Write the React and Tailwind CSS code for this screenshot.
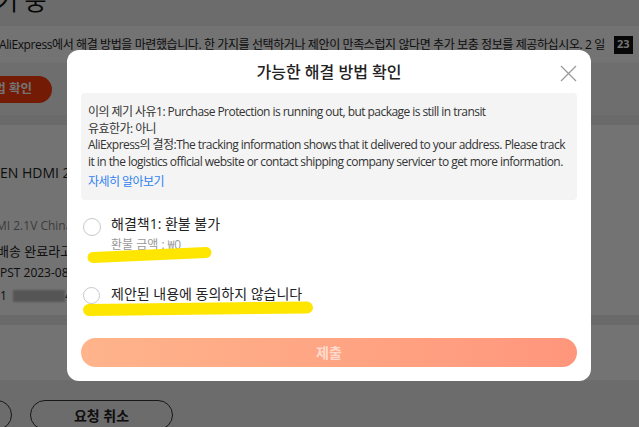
import React from "react";

const FONT = { fontFamily: "'Open Sans', 'Noto Sans CJK KR', sans-serif" };

export default function App() {
  return (
    <div
      className="relative w-[639px] h-[427px] overflow-hidden bg-[#efefef] text-[#222]"
      style={FONT}
    >
      {/* underlying page */}
      <div className="flex flex-col">
        <div className="h-[26px] bg-[#efefef] overflow-hidden">
          <div className="-mt-[15px] -ml-[26px] text-[24px] leading-[32px] whitespace-nowrap text-[#111]">
            대기 중
          </div>
        </div>
        <div className="h-[37px] bg-[#ffffff] flex items-center whitespace-nowrap overflow-hidden">
          <span className="text-[12px] tracking-[-0.4px] text-[#222] -ml-[1px]">
            AliExpress에서 해결 방법을 마련했습니다. 한 가지를 선택하거나 제안이 만족스럽지 않다면 추가 보충 정보를 제공하십시오. 2 일
          </span>
          <span className="ml-[9px] w-[19px] h-[18px] shrink-0 bg-[#111] text-white text-[11px] font-bold flex items-center justify-center">
            23
          </span>
        </div>
        <div className="h-[52px] bg-[#f3f3f3] flex items-center">
          <div className="w-[52px] flex justify-end">
            <div className="shrink-0 h-[27px] rounded-full bg-[#ff3d0a] text-white text-[12.5px] font-bold flex items-center pl-[20px] pr-[20px] whitespace-nowrap">
              해결 방법 확인
            </div>
          </div>
        </div>
        <div className="h-[10px] bg-[#eaeaea]" />
        <div className="h-[190px] bg-white flex flex-col whitespace-nowrap">
          <div className="mt-[38px] text-[14px] leading-[20px] text-[#222]">EN HDMI 2.1V 8K Cable</div>
          <div className="mt-[35px] -ml-[4px] text-[12px] leading-[16px] text-[#888]">MI 2.1V China Mainland</div>
          <div className="mt-[8px] -ml-[3px] text-[13px] leading-[18px] text-[#222]">배송 완료라고 표시되어</div>
          <div className="mt-[5px] text-[12px] leading-[16px] text-[#222]">PST 2023-08-21</div>
          <div className="mt-[7px] text-[12px] leading-[16px] text-[#222] flex items-center">
            <span>1</span>
            <span className="ml-[6px] w-[52px] h-[12px] bg-[#bdbdbd] blur-[1px]" />
            <span>4</span>
          </div>
        </div>
        <div className="h-[10px] bg-[#eaeaea]" />
        <div className="h-[55px] bg-white" />
        <div className="h-[20px]" />
        <div className="flex items-center gap-[18px]">
          <div className="-ml-[100px] w-[112px] h-[30px] rounded-full border border-[#333]" />
          <div className="w-[143px] h-[30px] rounded-full border border-[#333] flex items-center justify-center text-[14px] font-semibold text-[#222]">
            요청 취소
          </div>
        </div>
      </div>

      {/* overlay */}
      <div className="absolute inset-0 bg-black/55" />

      {/* modal */}
      <div className="absolute left-[67px] top-[50px] w-[524px] h-[331px] bg-white rounded-[12px] px-[14px] flex flex-col">
        <div className="mt-[10px] h-[24px] leading-[24px] text-center text-[16px] font-medium text-[#222]">
          가능한 해결 방법 확인
        </div>
        <svg
          className="absolute right-[14px] top-[15px]"
          width="17"
          height="17"
          viewBox="0 0 17 17"
          fill="none"
        >
          <path d="M1 1L16 16M16 1L1 16" stroke="#9a9a9a" strokeWidth="1.3" />
        </svg>

        <div className="mt-[9px] h-[107px] bg-[#f4f4f4] rounded-[4px] px-[7px] pt-[11px] text-[12px] leading-[16.5px] tracking-[-0.55px] text-[#333] whitespace-nowrap">
          <div>이의 제기 사유1: Purchase Protection is running out, but package is still in transit</div>
          <div>유효한가: 아니</div>
          <div>AliExpress의 결정:The tracking information shows that it delivered to your address. Please track</div>
          <div>it in the logistics official website or contact shipping company servicer to get more information.</div>
          <div className="mt-[4px] text-[#2d7ff0]">자세히 알아보기</div>
        </div>

        <div className="mt-[14px] flex items-start">
          <div className="ml-[2px] mt-[4px] w-[18px] h-[18px] rounded-full border border-[#c8c8c8] shrink-0" />
          <div className="ml-[10px] flex flex-col">
            <div className="text-[14px] leading-[20px] text-[#222]">해결책1: 환불 불가</div>
            <div className="mt-[3px] text-[12px] leading-[16px] text-[#999]">환불 금액 : ₩0</div>
          </div>
        </div>

        <div className="mt-[31px] flex items-start">
          <div className="ml-[2px] mt-[3px] w-[17px] h-[17px] rounded-full border border-[#c8c8c8] shrink-0" />
          <div className="ml-[11px] text-[14px] leading-[20px] text-[#222]">제안된 내용에 동의하지 않습니다</div>
        </div>

        <div className="mt-[34px] h-[29px] rounded-full bg-gradient-to-r from-[#ffb48b] to-[#ff967c] flex items-center justify-center text-[14px] font-bold text-white/60">
          제출
        </div>
      </div>

      {/* yellow highlight marks */}
      <svg className="absolute inset-0 pointer-events-none" width="639" height="427">
        <path d="M93 257.5 L206 252.5" stroke="#ffe600" strokeWidth="11" strokeLinecap="round" />
        <path d="M89 310 L307 307.5" stroke="#ffe600" strokeWidth="12" strokeLinecap="round" />
      </svg>
    </div>
  );
}
